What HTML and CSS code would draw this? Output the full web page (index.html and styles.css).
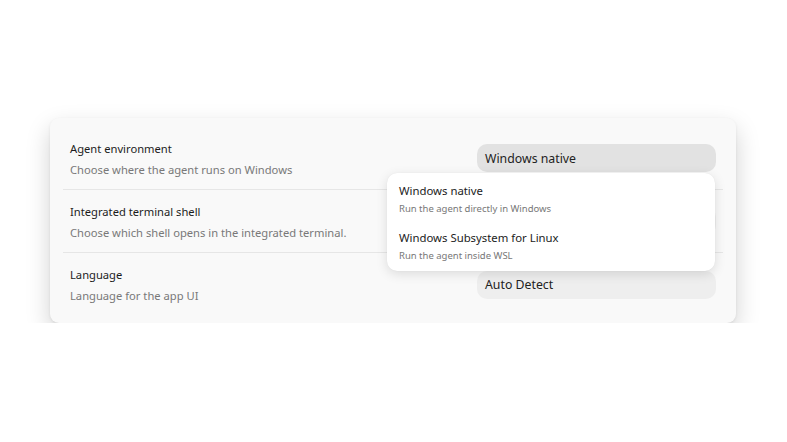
FILE: index.html
```html
<!DOCTYPE html>
<html lang="en">
<head>
<meta charset="utf-8">
<title>Settings</title>
<link rel="stylesheet" href="styles.css">
</head>
<body>
<div class="card">
  <div class="row">
    <div class="info">
      <div class="title">Agent environment</div>
      <div class="desc">Choose where the agent runs on Windows</div>
    </div>
    <div class="select-wrap">
      <div class="select active">Windows native</div>
      <div class="menu">
        <div class="item">
          <div class="item-title">Windows native</div>
          <div class="item-sub">Run the agent directly in Windows</div>
        </div>
        <div class="item">
          <div class="item-title">Windows Subsystem for Linux</div>
          <div class="item-sub">Run the agent inside WSL</div>
        </div>
      </div>
    </div>
  </div>
  <div class="row">
    <div class="info">
      <div class="title">Integrated terminal shell</div>
      <div class="desc">Choose which shell opens in the integrated terminal.</div>
    </div>
    <div class="select-wrap">
      <div class="select"></div>
    </div>
  </div>
  <div class="row">
    <div class="info">
      <div class="title">Language</div>
      <div class="desc">Language for the app UI</div>
    </div>
    <div class="select-wrap">
      <div class="select">Auto Detect</div>
    </div>
  </div>
</div>
</body>
</html>
```
FILE: styles.css
```css
html, body {
  margin: 0;
  padding: 0;
  background: #ffffff;
}
body {
  font-family: "Noto Sans", "Open Sans", sans-serif;
  color: #1f1f1f;
  padding: 118px 51px 0 50px;
}
.card {
  background: #f9f9f9;
  border-radius: 9px;
  padding: 9px 13px 7px;
  box-shadow: 0 10px 24px rgba(0,0,0,0.18), 0 1px 3px rgba(0,0,0,0.07);
}
.row {
  height: 63px;
  box-sizing: border-box;
  display: flex;
  align-items: center;
  justify-content: space-between;
  padding: 0 7px;
  border-bottom: 1px solid #e6e6e6;
}
.row:last-child {
  border-bottom: none;
}
.info {
  display: flex;
  flex-direction: column;
  gap: 5px;
  padding-top: 2px;
}
.title {
  font-size: 11.2px;
  line-height: 16px;
  color: #1c1c1c;
}
.desc {
  font-size: 11.2px;
  line-height: 16px;
  color: #787878;
}
.select-wrap {
  position: relative;
  width: 239px;
}
.select {
  height: 28px;
  box-sizing: border-box;
  border-radius: 10px;
  background: #eeeeee;
  padding: 0 8px;
  display: flex;
  align-items: center;
  font-size: 12.3px;
  color: #222222;
}
.select.active {
  background: #e2e2e2;
}
.menu {
  position: absolute;
  top: 29px;
  left: -90px;
  width: 328px;
  box-sizing: border-box;
  background: #ffffff;
  border-radius: 10px;
  padding: 2px 0 2px;
  box-shadow: 0 3px 12px rgba(0,0,0,0.12), 0 0 1px rgba(0,0,0,0.08);
  z-index: 5;
}
.item {
  padding: 8px 12px 7px;
}
.item-title {
  font-size: 11.35px;
  line-height: 16px;
  color: #1c1c1c;
}
.item-sub {
  margin-top: 3px;
  font-size: 9.5px;
  line-height: 13px;
  color: #777777;
}
```
